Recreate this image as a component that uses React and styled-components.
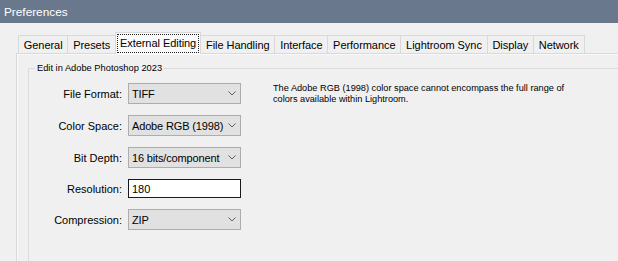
import React from "react";
import styled, { createGlobalStyle, css } from "styled-components";

const GlobalStyle = createGlobalStyle`
  html, body {
    margin: 0;
    padding: 0;
  }
  body {
    width: 618px;
    height: 261px;
    overflow: hidden;
    background: #f0f0f0;
    font-family: "Liberation Sans", Arial, sans-serif;
    color: #000;
  }
`;

const Window = styled.div`
  width: 618px;
  height: 261px;
  display: flex;
  flex-direction: column;
  background: #f0f0f0;
`;

const TitleBar = styled.div`
  height: 23px;
  flex: none;
  background: #6a788d;
  color: #fff;
  font-size: 11.8px;
  padding-left: 4px;
  display: flex;
  align-items: center;
`;

const Content = styled.div`
  flex: 1;
  min-height: 0;
  padding: 9px 0 0 16px;
  display: flex;
  flex-direction: column;
`;

const TabStrip = styled.div`
  display: flex;
  align-items: flex-end;
  height: 21px;
  padding-left: 3px;
  position: relative;
  z-index: 1;
`;

const Tab = styled.div`
  box-sizing: border-box;
  height: 18px;
  padding: 0 4.8px;
  margin-left: -1px;
  border: 1px solid #d9d9d9;
  border-bottom: none;
  background: #f0f0f0;
  font-size: 11px;
  letter-spacing: -0.05px;
  display: flex;
  align-items: center;
  white-space: nowrap;
  ${(p) =>
    p.$active &&
    css`
      height: 22px;
      margin-bottom: -1px;
      padding: 0 2px;
      background: #fafafa;
      position: relative;
      z-index: 2;
    `}
`;

const FocusLabel = styled.span`
  outline: 1px dotted #222;
  padding: 2px 2px 3px;
`;

const Panel = styled.div`
  flex: 1;
  border-top: 1px solid #d9d9d9;
  border-left: 1px solid #d9d9d9;
  box-shadow: inset 1px 1px 0 #f9f9f9;
  padding: 8px 0 0 11px;
  display: flex;
`;

const Group = styled.fieldset`
  flex: 1;
  margin: 0 -10px 0 0;
  padding: 0;
  border: 1px solid #dcdcdc;
  border-bottom: none;
  min-width: 0;
`;

const Legend = styled.legend`
  font-size: 9.3px;
  line-height: 12px;
  padding: 0 2px;
  margin-left: 6px;
`;

const Body = styled.div`
  display: flex;
  gap: 32px;
  padding: 9px 0 0 11px;
`;

const Form = styled.div`
  display: grid;
  grid-template-columns: 82px 113px;
  grid-template-rows: repeat(3, 21px) 19px 21px;
  column-gap: 6px;
  row-gap: 11px;
`;

const Label = styled.div`
  font-size: 11px;
  text-align: right;
  align-self: center;
  white-space: nowrap;
`;

const SelectBox = styled.div`
  box-sizing: border-box;
  height: 21px;
  border: 1px solid #adadad;
  background: #e1e1e1;
  padding: 0 4px 0 3px;
  font-size: 11px;
  letter-spacing: -0.15px;
  display: flex;
  align-items: center;
  justify-content: space-between;
  white-space: nowrap;
`;

const TextBox = styled.input`
  box-sizing: border-box;
  height: 19px;
  width: 100%;
  margin: 0;
  border: 1px solid #1a1a1a;
  background: #fff;
  padding: 0 3px;
  font-family: inherit;
  font-size: 11px;
  color: #000;
  outline: none;
`;

const Note = styled.p`
  margin: 0;
  width: 300px;
  font-size: 9.2px;
  line-height: 11px;
`;

const Chevron = () => (
  <svg width="8" height="5" viewBox="0 0 8 5">
    <polyline points="0.5,0.5 4,4 7.5,0.5" fill="none" stroke="#606060" strokeWidth="1" />
  </svg>
);

const tabs = [
  "General",
  "Presets",
  "External Editing",
  "File Handling",
  "Interface",
  "Performance",
  "Lightroom Sync",
  "Display",
  "Network",
];

const Select = ({ value }) => (
  <SelectBox>
    <span>{value}</span>
    <Chevron />
  </SelectBox>
);

export default function App() {
  return (
    <Window>
      <GlobalStyle />
      <TitleBar>Preferences</TitleBar>
      <Content>
        <TabStrip>
          {tabs.map((t) =>
            t === "External Editing" ? (
              <Tab key={t} $active>
                <FocusLabel>{t}</FocusLabel>
              </Tab>
            ) : (
              <Tab key={t}>{t}</Tab>
            )
          )}
        </TabStrip>
        <Panel>
          <Group>
            <Legend>Edit in Adobe Photoshop 2023</Legend>
            <Body>
              <Form>
                <Label>File Format:</Label>
                <Select value="TIFF" />
                <Label>Color Space:</Label>
                <Select value="Adobe RGB (1998)" />
                <Label>Bit Depth:</Label>
                <Select value="16 bits/component" />
                <Label>Resolution:</Label>
                <TextBox readOnly value="180" />
                <Label>Compression:</Label>
                <Select value="ZIP" />
              </Form>
              <Note>
                The Adobe RGB (1998) color space cannot encompass the full range of
                colors available within Lightroom.
              </Note>
            </Body>
          </Group>
        </Panel>
      </Content>
    </Window>
  );
}
